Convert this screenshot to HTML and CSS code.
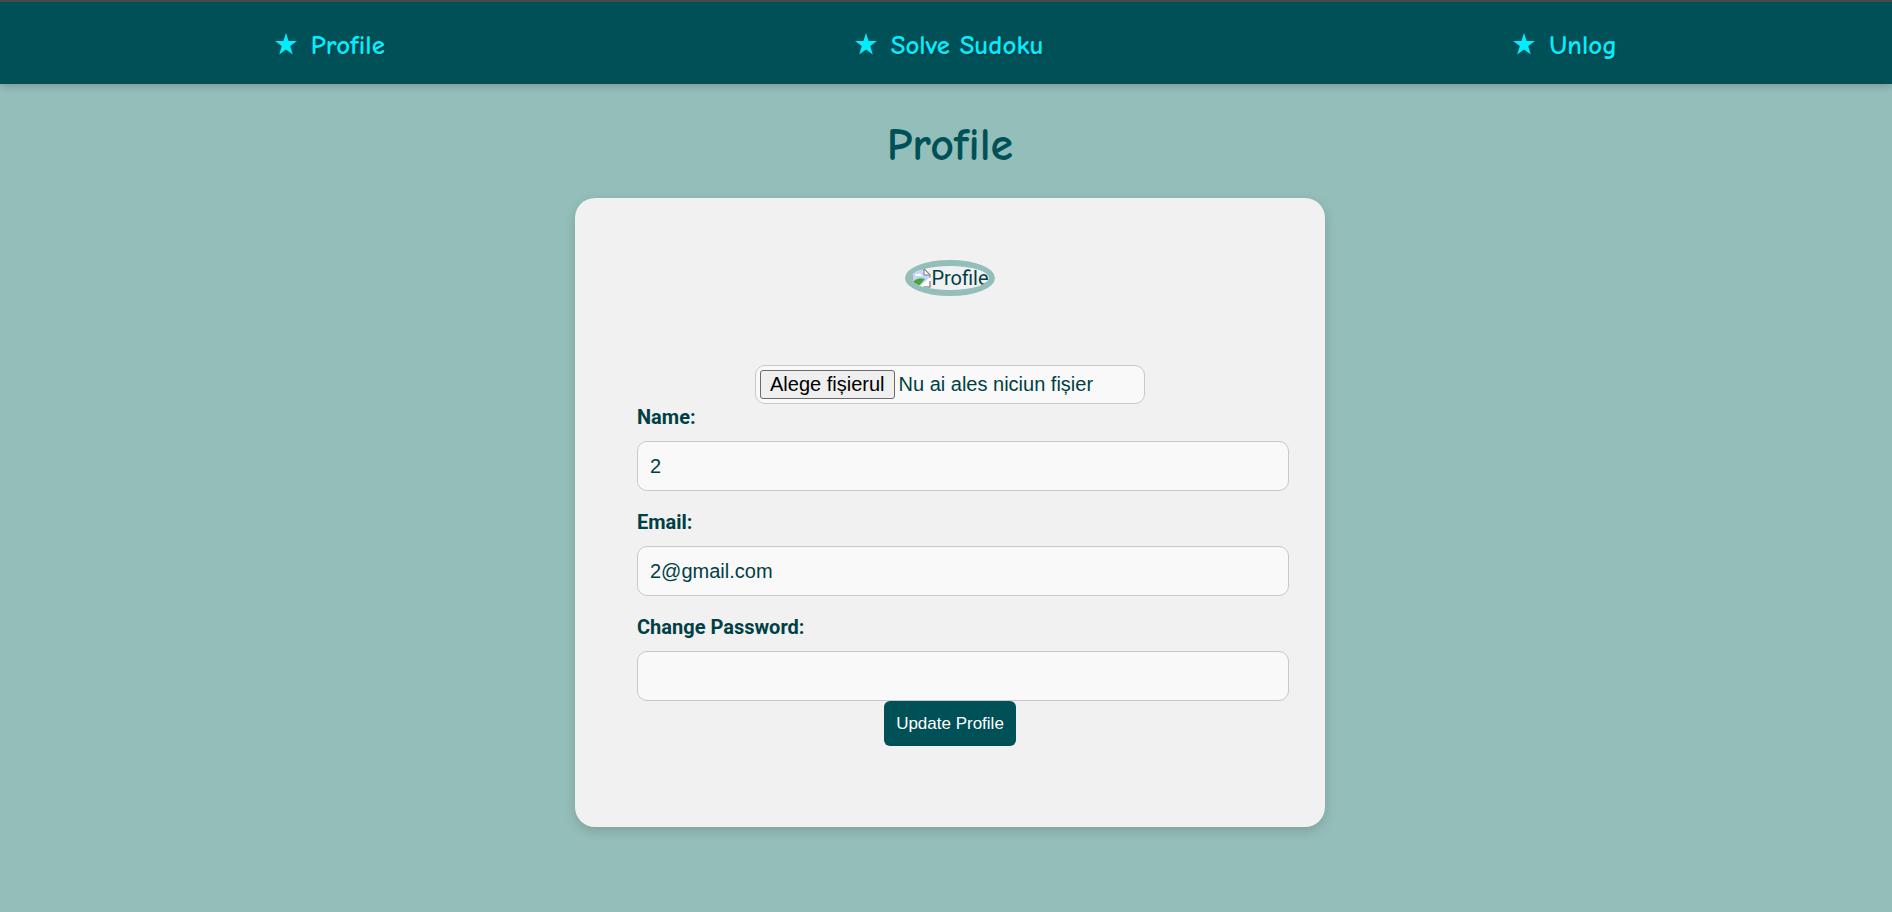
FILE: index.html
```html
<!DOCTYPE html>
<html lang="en">
<head>
<meta charset="utf-8">
<meta name="viewport" content="width=device-width, initial-scale=1">
<title>Profile</title>
<link rel="stylesheet" href="styles.css">
</head>
<body>
<nav class="navbar">
  <ul class="nav-list">
    <li><a class="nav-link" href="#profile"><svg class="star" viewBox="0 0 22 22" aria-hidden="true"><path d="M11 0l2.6 8.1H22l-6.8 5 2.6 8.3-6.8-5-6.8 5 2.6-8.3L0 8.1h8.4z"/></svg><span class="nav-text">Profile</span></a></li>
    <li><a class="nav-link" href="#sudoku"><svg class="star" viewBox="0 0 22 22" aria-hidden="true"><path d="M11 0l2.6 8.1H22l-6.8 5 2.6 8.3-6.8-5-6.8 5 2.6-8.3L0 8.1h8.4z"/></svg><span class="nav-text">Solve Sudoku</span></a></li>
    <li><a class="nav-link" href="#unlog"><svg class="star" viewBox="0 0 22 22" aria-hidden="true"><path d="M11 0l2.6 8.1H22l-6.8 5 2.6 8.3-6.8-5-6.8 5 2.6-8.3L0 8.1h8.4z"/></svg><span class="nav-text">Unlog</span></a></li>
  </ul>
</nav>
<main class="page">
  <h1 class="title">Profile</h1>
  <form class="card">
    <div class="avatar">
      <svg class="avatar-icon" viewBox="0 0 20 20" aria-hidden="true">
        <path d="M1 1h12l6 6v12H1z" fill="#fff"/>
        <path d="M2 2h11v5h5v3L9 18H2z" fill="#c3d5f8"/>
        <path d="M4 8a2 2 0 0 1 3-2 2.500 2.500 0 0 1 4 2z" fill="#fff"/>
        <path d="M1 18v-3c3-4 8-6 13-4l-7 8z" fill="#4ba638"/>
        <path d="M1 19V1h12l6 6v3M19 13v6h-7" fill="none" stroke="#909090" stroke-width="1.500"/>
        <path d="M13 1v6h6z" fill="#f4f4f4" stroke="#808080"/>
        <path d="M8 20L20 9v3l-9 8z" fill="#fff"/>
      </svg>
      <span>Profile</span>
    </div>
    <div class="file-field">
      <label class="file-button" for="picture">Alege fișierul</label>
      <span class="file-status">Nu ai ales niciun fișier</span>
      <input class="file-input" id="picture" type="file">
    </div>
    <div class="fields">
      <div class="field">
        <label class="label" for="name">Name:</label>
        <input class="input" id="name" type="text" value="2">
      </div>
      <div class="field">
        <label class="label" for="email">Email:</label>
        <input class="input" id="email" type="email" value="2@gmail.com">
      </div>
      <div class="field">
        <label class="label" for="password">Change Password:</label>
        <input class="input" id="password" type="password">
      </div>
    </div>
    <button class="submit" type="submit">Update Profile</button>
  </form>
</main>
</body>
</html>
```
FILE: styles.css
```css
body {
  margin: 0;
  min-height: 100vh;
  background: #94beb9;
  color: #003f44;
  font: 20px/24px Roboto, sans-serif;
}

.navbar {
  border-top: 2px solid #4a4a4a;
  background: #005057;
  box-shadow: 0 2px 8px rgba(0, 0, 0, 0.2);
}

.nav-list {
  display: flex;
  justify-content: space-around;
  margin: 0;
  padding: 25px 40px 23px;
  list-style: none;
}

.nav-link {
  display: flex;
  align-items: center;
  gap: 14px;
  color: #00eeff;
  font: bold 27px/30px "Comic Sans MS", "Comic Neue", "Noto Sans", sans-serif;
  text-decoration: none;
  text-shadow: 1px 1px 2px rgba(0, 0, 0, 0.3);
}

.nav-text {
  padding-top: 4px;
}

.star {
  width: 22px;
  height: 22px;
  fill: currentColor;
}

.page {
  display: flex;
  flex-direction: column;
  align-items: center;
  padding: 32px 0 40px 8px;
}

.title {
  margin: 0 0 22px;
  color: #005057;
  font: bold 46px/60px "Comic Sans MS", "Comic Neue", "Noto Sans", sans-serif;
}

.card {
  box-sizing: border-box;
  display: flex;
  flex-direction: column;
  align-items: center;
  width: 100%;
  max-width: 750px;
  padding: 62px 36px 81px 62px;
  border-radius: 20px;
  background: #f1f1f1;
  box-shadow: 0 4px 12px rgba(0, 0, 0, 0.15);
}

.avatar {
  display: flex;
  align-items: center;
  margin: 0 26px 69px 0;
  border: 6px solid #94beb9;
  border-radius: 50%;
  overflow: hidden;
}

.avatar-icon {
  width: 20px;
  height: 20px;
}

.file-field {
  position: relative;
  box-sizing: border-box;
  display: flex;
  align-items: center;
  gap: 4px;
  width: 390px;
  max-width: 100%;
  margin-right: 26px;
  padding: 4px;
  border: 1px solid #c8c8c8;
  border-radius: 10px;
  background: #f9f9f9;
  font-family: "Liberation Sans", Arial, sans-serif;
}

.file-button {
  padding: 2px 9px;
  border: 1px solid #6b6b6b;
  border-radius: 3px;
  background: #efefef;
  color: #000;
  line-height: 23px;
}

.file-status {
  line-height: 23px;
}

.file-input {
  position: absolute;
  inset: 0;
  width: 100%;
  opacity: 0;
}

.fields {
  display: grid;
  gap: 19px;
  width: 100%;
  padding-top: 1px;
}

.field {
  display: grid;
  gap: 12px;
}

.label {
  font-weight: bold;
}

.input {
  box-sizing: border-box;
  width: 100%;
  height: 50px;
  padding: 12px;
  border: 1px solid #c8c8c8;
  border-radius: 10px;
  background: #f9f9f9;
  color: #003f44;
  font: 20px/24px "Liberation Sans", Arial, sans-serif;
}

.submit {
  margin-right: 26px;
  padding: 12px;
  border: 0;
  border-radius: 6px;
  background: #005057;
  color: #fff;
  font: 17px/21px "Liberation Sans", Arial, sans-serif;
}
```
